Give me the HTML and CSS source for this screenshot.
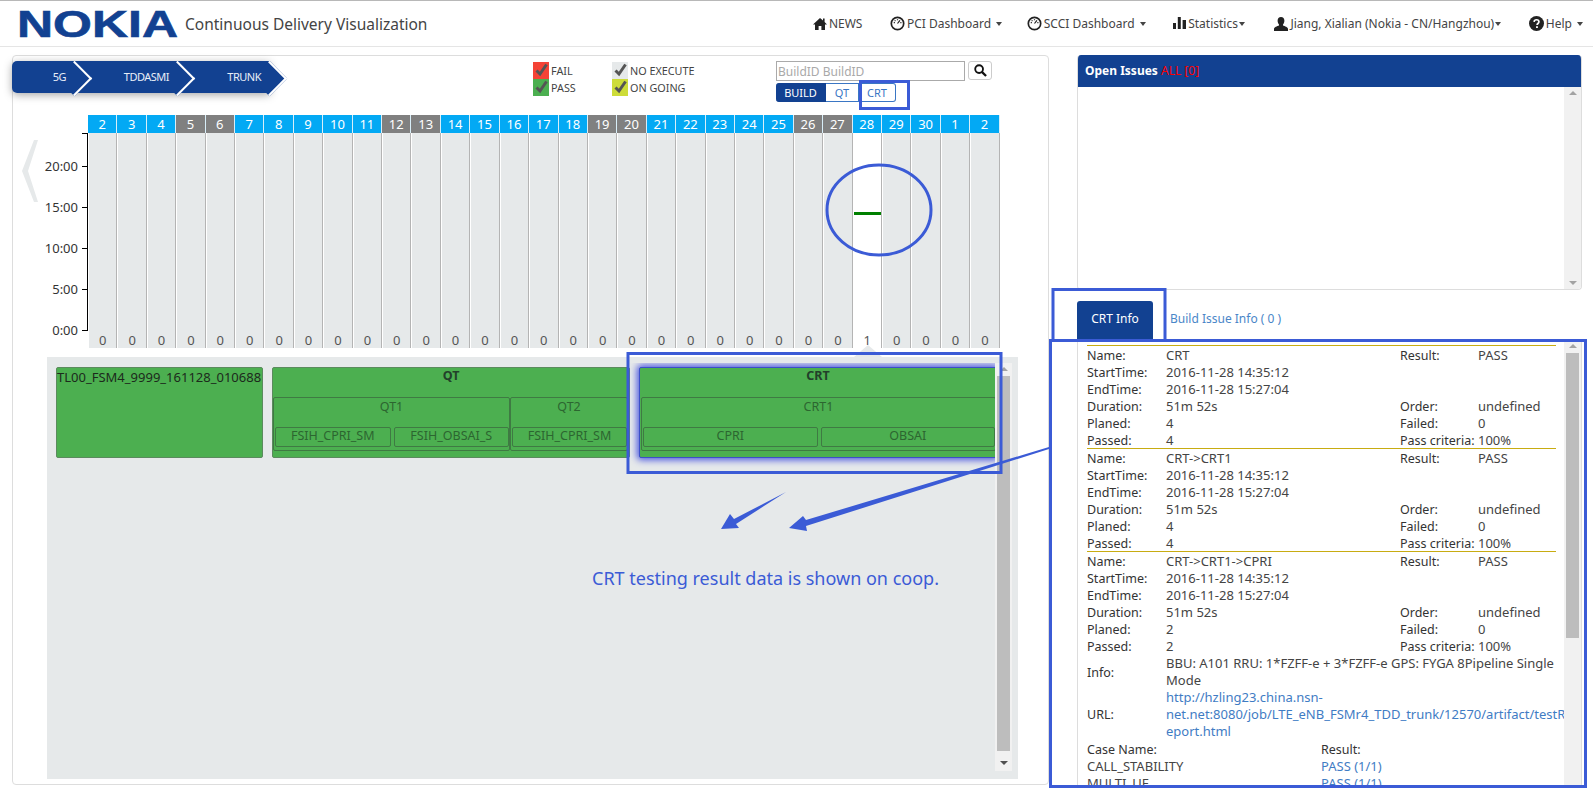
FILE: index.html
```html
<!DOCTYPE html>
<html lang="en">
<head>
    <meta charset="UTF-8">
    <title>Continuous Delivery Visualization</title>
    <link rel="stylesheet" href="styles.css">
</head>
<body>
    <nav class="navbar">
        <div class="brand">
            <svg class="logo" width="162" height="28" viewBox="0 0 162 28"><text x="0" y="26.5" textLength="161" lengthAdjust="spacingAndGlyphs">NOKIA</text></svg>
            <span class="brand-title">Continuous Delivery Visualization</span>
        </div>
        <ul class="nav-links">
            <li><svg class="ico" viewBox="0 0 14 14" width="14" height="14"><path d="M7 1 0 7.5h2V13h3.6V9h2.8v4H12V7.5h2L11.6 5V1.6H10v1.9z"/></svg>NEWS</li>
            <li class="nav-pci"><svg class="ico" viewBox="0 0 16 16" width="15" height="15"><circle cx="8" cy="8" r="6.6" fill="none" stroke="#222" stroke-width="1.8"/><path d="M8 8l2.6-3.4M4 7h1.2M11 7h1.2M8 3.4v1.2M5 4.6l.8.8" stroke="#222" stroke-width="1.3"/></svg>PCI Dashboard <i class="caret"></i></li>
            <li><svg class="ico" viewBox="0 0 16 16" width="15" height="15"><circle cx="8" cy="8" r="6.6" fill="none" stroke="#222" stroke-width="1.8"/><path d="M8 8l2.6-3.4M4 7h1.2M11 7h1.2M8 3.4v1.2M5 4.6l.8.8" stroke="#222" stroke-width="1.3"/></svg>SCCI Dashboard <i class="caret"></i></li>
            <li class="nav-stats"><svg class="ico" viewBox="0 0 13 13" width="13" height="13"><path d="M0 6h3v6H0zM4.8 0h3v12h-3zM9.6 3H13v9H9.6z"/></svg>Statistics<i class="caret tight"></i></li>
            <li><svg class="ico" viewBox="0 0 14 14" width="14" height="14"><path d="M7 0c2.200 0 3.400 1.600 3.400 3.800 0 1.500-.6 2.900-1.400 3.700v1.100c1.800.7 5 1.600 5 3.300V14H0v-2.100c0-1.700 3.200-2.600 5-3.300V7.500C4.200 6.700 3.600 5.300 3.600 3.800 3.600 1.600 4.800 0 7 0z"/></svg>Jiang, Xialian (Nokia - CN/Hangzhou)<i class="caret tight"></i></li>
            <li><svg class="ico" viewBox="0 0 16 16" width="15" height="15"><circle cx="8" cy="8" r="8"/><path d="M5.400 6.200C5.600 4.700 6.600 4 8 4c1.500 0 2.600.9 2.600 2.200 0 1.800-2 1.800-2 3.300" fill="none" stroke="#fff" stroke-width="1.800"/><path d="M7.500 10.800h2v2h-2z" fill="#fff"/></svg>Help <i class="caret"></i></li>
        </ul>
    </nav>

    <main class="main">
        <section class="left-panel">
            <div class="toolbar">
                <div class="crumbs">
                    <div class="crumb crumb-1"><span class="crumb-text">5G</span></div>
                    <div class="crumb crumb-2"><span class="crumb-text">TDDASMI</span></div>
                    <div class="crumb crumb-3"><span class="crumb-text">TRUNK</span></div>
                </div>
                <div class="legend">
                    <span class="legend-item"><i class="box fail"><svg class="check" viewBox="0 0 16 17" width="16" height="17"><path d="M3.500 8.500 7 12 13.500 2.500"/></svg></i>FAIL</span>
                    <span class="legend-item"><i class="box none"><svg class="check" viewBox="0 0 16 17" width="16" height="17"><path d="M3.500 8.500 7 12 13.500 2.500"/></svg></i>NO EXECUTE</span>
                    <span class="legend-item"><i class="box pass"><svg class="check" viewBox="0 0 16 17" width="16" height="17"><path d="M3.500 8.500 7 12 13.500 2.500"/></svg></i>PASS</span>
                    <span class="legend-item"><i class="box going"><svg class="check" viewBox="0 0 16 17" width="16" height="17"><path d="M3.500 8.500 7 12 13.500 2.500"/></svg></i>ON GOING</span>
                </div>
                <div class="search">
                    <div class="search-row">
                        <input class="search-input" type="text" placeholder="BuildID BuildID">
                        <button class="search-btn"><svg viewBox="0 0 14 14" width="13" height="13"><circle cx="5.500" cy="5.500" r="4.200" fill="none" stroke="#111" stroke-width="2"/><path d="M8.500 8.500l4.500 4.500" stroke="#111" stroke-width="2.400"/></svg></button>
                    </div>
                    <div class="btn-group">
                        <span class="seg seg-build">BUILD</span><span class="seg seg-qt">QT</span><span class="seg seg-crt">CRT</span>
                    </div>
                </div>
            </div>

            <div class="chart">
                <div class="axis">
                    <div class="tick">20:00</div>
                    <div class="tick">15:00</div>
                    <div class="tick">10:00</div>
                    <div class="tick">5:00</div>
                    <div class="tick">0:00</div>
                </div>
                <div class="days">
                    <div class="day"><b class="day-num">2</b><div class="day-body"><span class="count">0</span></div></div>
                    <div class="day"><b class="day-num">3</b><div class="day-body"><span class="count">0</span></div></div>
                    <div class="day"><b class="day-num">4</b><div class="day-body"><span class="count">0</span></div></div>
                    <div class="day"><b class="day-num off">5</b><div class="day-body"><span class="count">0</span></div></div>
                    <div class="day"><b class="day-num off">6</b><div class="day-body"><span class="count">0</span></div></div>
                    <div class="day"><b class="day-num">7</b><div class="day-body"><span class="count">0</span></div></div>
                    <div class="day"><b class="day-num">8</b><div class="day-body"><span class="count">0</span></div></div>
                    <div class="day"><b class="day-num">9</b><div class="day-body"><span class="count">0</span></div></div>
                    <div class="day"><b class="day-num">10</b><div class="day-body"><span class="count">0</span></div></div>
                    <div class="day"><b class="day-num">11</b><div class="day-body"><span class="count">0</span></div></div>
                    <div class="day"><b class="day-num off">12</b><div class="day-body"><span class="count">0</span></div></div>
                    <div class="day"><b class="day-num off">13</b><div class="day-body"><span class="count">0</span></div></div>
                    <div class="day"><b class="day-num">14</b><div class="day-body"><span class="count">0</span></div></div>
                    <div class="day"><b class="day-num">15</b><div class="day-body"><span class="count">0</span></div></div>
                    <div class="day"><b class="day-num">16</b><div class="day-body"><span class="count">0</span></div></div>
                    <div class="day"><b class="day-num">17</b><div class="day-body"><span class="count">0</span></div></div>
                    <div class="day"><b class="day-num">18</b><div class="day-body"><span class="count">0</span></div></div>
                    <div class="day"><b class="day-num off">19</b><div class="day-body"><span class="count">0</span></div></div>
                    <div class="day"><b class="day-num off">20</b><div class="day-body"><span class="count">0</span></div></div>
                    <div class="day"><b class="day-num">21</b><div class="day-body"><span class="count">0</span></div></div>
                    <div class="day"><b class="day-num">22</b><div class="day-body"><span class="count">0</span></div></div>
                    <div class="day"><b class="day-num">23</b><div class="day-body"><span class="count">0</span></div></div>
                    <div class="day"><b class="day-num">24</b><div class="day-body"><span class="count">0</span></div></div>
                    <div class="day"><b class="day-num">25</b><div class="day-body"><span class="count">0</span></div></div>
                    <div class="day"><b class="day-num off">26</b><div class="day-body"><span class="count">0</span></div></div>
                    <div class="day"><b class="day-num off">27</b><div class="day-body"><span class="count">0</span></div></div>
                    <div class="day"><b class="day-num">28</b><div class="day-body selected"><i class="run-bar"></i><span class="count">1</span></div></div>
                    <div class="day"><b class="day-num">29</b><div class="day-body"><span class="count">0</span></div></div>
                    <div class="day"><b class="day-num">30</b><div class="day-body"><span class="count">0</span></div></div>
                    <div class="day"><b class="day-num">1</b><div class="day-body"><span class="count">0</span></div></div>
                    <div class="day"><b class="day-num">2</b><div class="day-body"><span class="count">0</span></div></div>
                </div>
            </div>

            <div class="coop">
                <div class="coop-scroll">
                    <div class="stage stage-build"><span class="build-id">TL00_FSM4_9999_161128_010688</span></div>
                    <div class="stage stage-qt">
                        <div class="stage-name">QT</div>
                        <div class="groups">
                            <div class="group group-qt1">
                                <div class="group-name">QT1</div>
                                <div class="leaves"><span class="leaf">FSIH_CPRI_SM</span><span class="leaf">FSIH_OBSAI_S</span></div>
                            </div>
                            <div class="group group-qt2">
                                <div class="group-name">QT2</div>
                                <div class="leaves"><span class="leaf">FSIH_CPRI_SM</span></div>
                            </div>
                        </div>
                    </div>
                    <div class="stage stage-crt">
                        <div class="stage-name">CRT</div>
                        <div class="groups">
                            <div class="group group-crt1">
                                <div class="group-name">CRT1</div>
                                <div class="leaves"><span class="leaf">CPRI</span><span class="leaf">OBSAI</span></div>
                            </div>
                        </div>
                    </div>
                </div>
                <div class="scrollbar coop-bar">
                    <i class="arrow-up"></i>
                    <i class="thumb"></i>
                    <i class="arrow-down"></i>
                </div>
            </div>
        </section>

        <aside class="right-col">
            <section class="issues">
                <h4 class="issues-head">Open Issues <span class="issues-all">ALL [0]</span></h4>
                <div class="issues-body">
                    <div class="scrollbar issues-bar"><i class="arrow-up"></i><i class="arrow-down"></i></div>
                </div>
            </section>

            <div class="tabs">
                <span class="tab active">CRT Info</span>
                <span class="tab">Build Issue Info ( 0 )</span>
            </div>

            <div class="info">
                <div class="info-list">
                    <dl class="info-block">
                        <dt>Name:</dt><dd>CRT</dd><dt>Result:</dt><dd>PASS</dd>
                        <dt>StartTime:</dt><dd class="wide">2016-11-28 14:35:12</dd>
                        <dt>EndTime:</dt><dd class="wide">2016-11-28 15:27:04</dd>
                        <dt>Duration:</dt><dd>51m 52s</dd><dt>Order:</dt><dd>undefined</dd>
                        <dt>Planed:</dt><dd>4</dd><dt>Failed:</dt><dd>0</dd>
                        <dt>Passed:</dt><dd>4</dd><dt>Pass criteria:</dt><dd>100%</dd>
                    </dl>
                    <dl class="info-block">
                        <dt>Name:</dt><dd>CRT-&gt;CRT1</dd><dt>Result:</dt><dd>PASS</dd>
                        <dt>StartTime:</dt><dd class="wide">2016-11-28 14:35:12</dd>
                        <dt>EndTime:</dt><dd class="wide">2016-11-28 15:27:04</dd>
                        <dt>Duration:</dt><dd>51m 52s</dd><dt>Order:</dt><dd>undefined</dd>
                        <dt>Planed:</dt><dd>4</dd><dt>Failed:</dt><dd>0</dd>
                        <dt>Passed:</dt><dd>4</dd><dt>Pass criteria:</dt><dd>100%</dd>
                    </dl>
                    <dl class="info-block">
                        <dt>Name:</dt><dd>CRT-&gt;CRT1-&gt;CPRI</dd><dt>Result:</dt><dd>PASS</dd>
                        <dt>StartTime:</dt><dd class="wide">2016-11-28 14:35:12</dd>
                        <dt>EndTime:</dt><dd class="wide">2016-11-28 15:27:04</dd>
                        <dt>Duration:</dt><dd>51m 52s</dd><dt>Order:</dt><dd>undefined</dd>
                        <dt>Planed:</dt><dd>2</dd><dt>Failed:</dt><dd>0</dd>
                        <dt>Passed:</dt><dd>2</dd><dt>Pass criteria:</dt><dd>100%</dd>
                        <dt class="mid">Info:</dt><dd class="full">BBU: A101 RRU: 1*FZFF-e + 3*FZFF-e GPS: FYGA 8Pipeline Single<br>Mode</dd>
                        <dt class="mid">URL:</dt><dd class="full link">http://hzling23.china.nsn-<br>net.net:8080/job/LTE_eNB_FSMr4_TDD_trunk/12570/artifact/testR<br>eport.html</dd>
                    </dl>
                    <div class="cases">
                        <span class="case-head">Case Name:</span><span class="case-head">Result:</span>
                        <span>CALL_STABILITY</span><span class="link">PASS (1/1)</span>
                        <span>MULTI_UE</span><span class="link">PASS (1/1)</span>
                    </div>
                </div>
                <div class="scrollbar info-bar">
                    <i class="arrow-up"></i>
                    <i class="thumb"></i>
                </div>
            </div>
        </aside>
    </main>

    <!-- hand drawn markup on top of the screenshot -->
    <svg class="markup" width="1593" height="788" viewBox="0 0 1593 788">
        <g fill="none" stroke="#3b5bd6" stroke-width="3">
            <rect x="860.500" y="81.500" width="48" height="27"/>
            <ellipse cx="879" cy="210" rx="52" ry="45"/>
            <rect x="628" y="353.500" width="373" height="119"/>
            <rect x="1053" y="289.500" width="112" height="51"/>
            <rect x="1050.500" y="340.500" width="535" height="446"/>
        </g>
        <g fill="#3b5bd6">
            <path d="M786 492 736 524 739 528 721 529 730 514 734 519z"/>
            <path d="M1049 447 806 520 803 516 789 528 807 531 806 526 1049 449z"/>
        </g>
    </svg>
    <span class="markup-note">CRT testing result data is shown on coop.</span>
    <svg class="prev" width="16" height="62" viewBox="0 0 16 62"><path d="M12 0h4L6 31l10 31h-4L0 31z" fill="#e6e9ea"/></svg>
</body>
</html>
```

FILE: styles.css
```css
* { box-sizing: border-box; }
html, body { height: 100%; }
body { margin: 0; height: 788px; overflow: hidden; position: relative; font-family: "Noto Sans", Arial, sans-serif; font-size: 12px; color: #333; background: #fff; }
ul, dl, dd, h4 { margin: 0; padding: 0; }
i { font-style: normal; }

/* top bar */
.navbar { display: flex; align-items: center; justify-content: space-between; height: 47px; border-top: 1px solid #b8b8b8; border-bottom: 1px solid #e5e5e5; padding: 0 10px 0 17px; }
.brand { display: flex; align-items: center; gap: 6px; }
.logo { display: block; }
.logo text { font-family: "Liberation Sans", Arial, sans-serif; font-weight: bold; font-size: 36px; fill: #124191; stroke: #124191; stroke-width: 0.6px; }
.brand-title { font-size: 15.500px; color: #444; }
.nav-links { display: flex; list-style: none; gap: 27.500px; font-size: 12px; color: #444; }
.nav-links li { display: flex; align-items: center; white-space: pre; }
.nav-links .nav-pci { margin-right: -3px; }
.nav-links .nav-stats { margin-right: 2px; }
.ico { margin-right: 2px; fill: #222; }
.caret { display: inline-block; margin-left: 2px; border-top: 4px solid #444; border-left: 3px solid transparent; border-right: 3px solid transparent; }
.caret.tight { margin-left: 1px; }

.main { display: flex; padding: 8px 10px 0 12px; }
.left-panel { width: 1037px; height: 730px; border: 1px solid #ddd; border-radius: 4px; }

/* breadcrumb, legend, search */
.toolbar { display: flex; height: 59px; padding-top: 5px; }
.crumbs { display: flex; height: 32px; margin-left: -1px; box-shadow: 0 2px 8px rgba(0, 0, 0, 0.35); border-radius: 5px 0 0 5px; width: 258px; }
.crumb { position: relative; height: 32px; line-height: 32px; background: #124191; color: #e8eef8; text-align: right; padding-right: 9px; font-size: 11px; letter-spacing: -0.5px; }
.crumb::after { content: ""; position: absolute; top: 4.500px; right: -11.500px; width: 23px; height: 23px; background: #124191; border-top: 2px solid #fff; border-right: 2px solid #fff; transform: rotate(45deg); z-index: 1; }
.crumb-text { position: relative; z-index: 2; }
.crumb-1 { width: 63px; border-radius: 5px 0 0 5px; }
.crumb-2 { width: 103px; }
.crumb-3 { width: 92px; }
.legend { display: grid; grid-template-columns: 79px 100px; grid-auto-rows: 17px; margin: 1px 0 0 263px; font-size: 10.800px; color: #444; }
.legend-item { display: flex; align-items: center; gap: 2px; }
.box { display: block; flex: none; width: 16px; height: 17px; }
.check { display: block; fill: none; stroke: #555; stroke-width: 3; }
.fail { background: #f44336; }
.pass { background: #4caf50; }
.none { background: #e6e9ea; }
.going { background: #cddc39; }
.search { margin-left: 64px; }
.search-row { display: flex; gap: 3px; }
.search-input { width: 189px; height: 20px; border: 1px solid #aaa; padding: 0 1px; font: 12px "Noto Sans", Arial, sans-serif; }
.search-input::placeholder { color: #a9a9a9; }
.search-btn { display: flex; align-items: center; justify-content: center; width: 24px; height: 19px; padding: 0; background: #fff; border: 1px solid #ccc; border-radius: 3px; }
.btn-group { display: flex; margin-top: 2px; height: 19px; font-size: 11px; }
.seg { display: flex; align-items: center; justify-content: center; border: 1px solid #3a76c4; border-left: 0; color: #3a76c4; }
.seg-build { width: 50px; background: #124191; border-color: #124191; color: #fff; border-radius: 3px 0 0 3px; }
.seg-qt { width: 33px; }
.seg-crt { width: 37px; border-radius: 0 3px 3px 0; }

/* build calendar */
.chart { display: flex; height: 233px; }
.axis { position: relative; width: 75px; height: 198px; margin-top: 18px; padding-top: 12.500px; border-right: 1px solid #000; background: linear-gradient(#000, #000) top right / 5px 1px no-repeat; }
.tick { position: relative; height: 41px; line-height: 41px; padding-right: 9px; text-align: right; font-size: 13px; color: #333; }
.tick::after { content: ""; position: absolute; top: 20px; right: 0; width: 5px; height: 1px; background: #000; }
.days { display: grid; grid-template-columns: repeat(31, 29.420px); }
.day { display: flex; flex-direction: column; }
.day-num { display: block; height: 18px; line-height: 18px; background: #03a9f4; border-right: 1px solid #d8eef8; color: #fff; font-size: 13px; font-weight: normal; text-align: center; }
.day-num.off { background: #808080; }
.day-body { display: flex; flex-direction: column; flex: 1; background: #e6e9ea; border-left: 1px solid #fff; border-right: 1px solid #b4b4b4; }
.day-body.selected { background: #fff; position: relative; }
.day-body.selected::after { content: ""; position: absolute; left: 0; bottom: -9px; border: 14px solid transparent; border-top: 0; border-bottom: 12px solid #e6e9ea; }
.run-bar { display: block; height: 3px; margin-top: 79px; background: #008000; }
.count { display: block; margin-top: auto; line-height: 15px; text-align: center; font-size: 13px; color: #555; }

/* coop area */
.coop { display: flex; width: 971px; height: 422px; margin: 9px 0 0 34px; padding: 6px 6px 8px 9px; background: #e6e9ea; }
.coop-scroll { display: flex; flex: 1; min-width: 0; gap: 9px; padding-top: 4px; overflow: hidden; align-items: flex-start; }
.stage { flex: none; height: 91px; background: #4caf50; border: 1px solid #5b8a5e; border-radius: 2px; color: #1d4a20; }
.stage-build { width: 207px; }
.stage-qt { width: 358px; }
.stage-crt { width: 358px; border-color: #3c4fc8; box-shadow: 0 0 7px 2px #4a55e0; }
.stage-crt .groups { padding-left: 1px; }
.build-id { font-size: 13px; color: #1c2a1c; line-height: 18px; white-space: nowrap; }
.stage-name { height: 29px; line-height: 15px; text-align: center; font-weight: bold; font-size: 12.500px; color: #22402a; }
.groups { display: flex; }
.group { height: 54px; border: 1px solid #3f7a43; border-radius: 2px; color: #2c6630; }
.group-qt1 { width: 237px; }
.group-qt2 { width: 118px; }
.group-crt1 { width: 360px; }
.group-name { height: 29px; line-height: 18px; text-align: center; font-size: 12.500px; }
.leaves { display: flex; gap: 3px; padding-left: 1px; }
.leaf { flex: 1; height: 20px; line-height: 16px; border: 1px solid #3f7a43; border-radius: 2px; text-align: center; font-size: 12.500px; }

.scrollbar { display: flex; flex-direction: column; flex: none; background: #f1f1f1; }
.coop-bar { width: 17px; height: 408px; padding: 0 2px; }
.thumb { display: block; background: #bdbdbd; }
.coop-bar .thumb { height: 375px; margin-top: 5px; }
.arrow-up, .arrow-down { display: block; flex: none; width: 0; align-self: center; border-left: 4px solid transparent; border-right: 4px solid transparent; }
.arrow-up { margin-top: 4px; border-bottom: 4px solid #a3a3a3; }
.arrow-down { margin-top: auto; margin-bottom: 6px; border-top: 4px solid #505050; }

/* right column */
.right-col { width: 505px; margin-left: 28px; }
.issues { height: 235px; border: 1px solid #ddd; border-top: 0; border-radius: 4px; overflow: hidden; }
.issues-head { height: 32px; line-height: 32px; margin: 0 -1px; padding-left: 8px; background: #124191; color: #fff; font-size: 12px; font-weight: bold; }
.issues-all { color: #f00; font-weight: normal; }
.issues-body { display: flex; justify-content: flex-end; height: 202px; }
.issues-bar { width: 17px; height: 100%; }
.issues-bar .arrow-down { border-top-color: #a3a3a3; margin-bottom: 4px; }
.tabs { display: flex; align-items: center; height: 38px; margin-top: 11px; padding-bottom: 3px; font-size: 12px; }
.tab { color: #4a86c8; padding-left: 17px; }
.tab.active { display: flex; align-items: center; justify-content: center; height: 38px; width: 76px; margin-bottom: -3px; padding: 0 0 3px; background: #124191; color: #fff; border-radius: 3px 3px 0 0; }
.info { display: flex; height: 448px; border: 1px solid #ddd; border-bottom: 0; overflow: hidden; font-size: 13px; line-height: 17px; }
.info-list { width: 486px; padding: 5px 0 0 9px; color: #444; }
.info-block { display: grid; grid-template-columns: 79px 234px 78px 78px; width: 469px; border-top: 1px solid #c8ac12; padding-top: 1px; margin-bottom: -1px; white-space: nowrap; }
.info-block dt { color: #333; font-size: 12.500px; }
.info-block .wide { grid-column: 2 / 5; }
.info-block .full { grid-column: 2 / 5; }
.info-block .mid { align-self: center; }
.link { color: #3f7cc4; }
.cases { display: grid; grid-template-columns: 234px 200px; padding-top: 2px; }
.case-head { color: #333; font-size: 12.500px; }
.info-bar { width: 17px; height: 100%; padding: 0 2px; }
.info-bar .thumb { height: 285px; margin-top: 5px; }

/* annotation layer */
.markup { position: absolute; left: 0; top: 0; pointer-events: none; }
.markup-note { position: absolute; left: 592px; top: 566px; font-size: 18px; color: #3b5bd6; white-space: nowrap; }
.prev { position: absolute; left: 22px; top: 140px; }
```
